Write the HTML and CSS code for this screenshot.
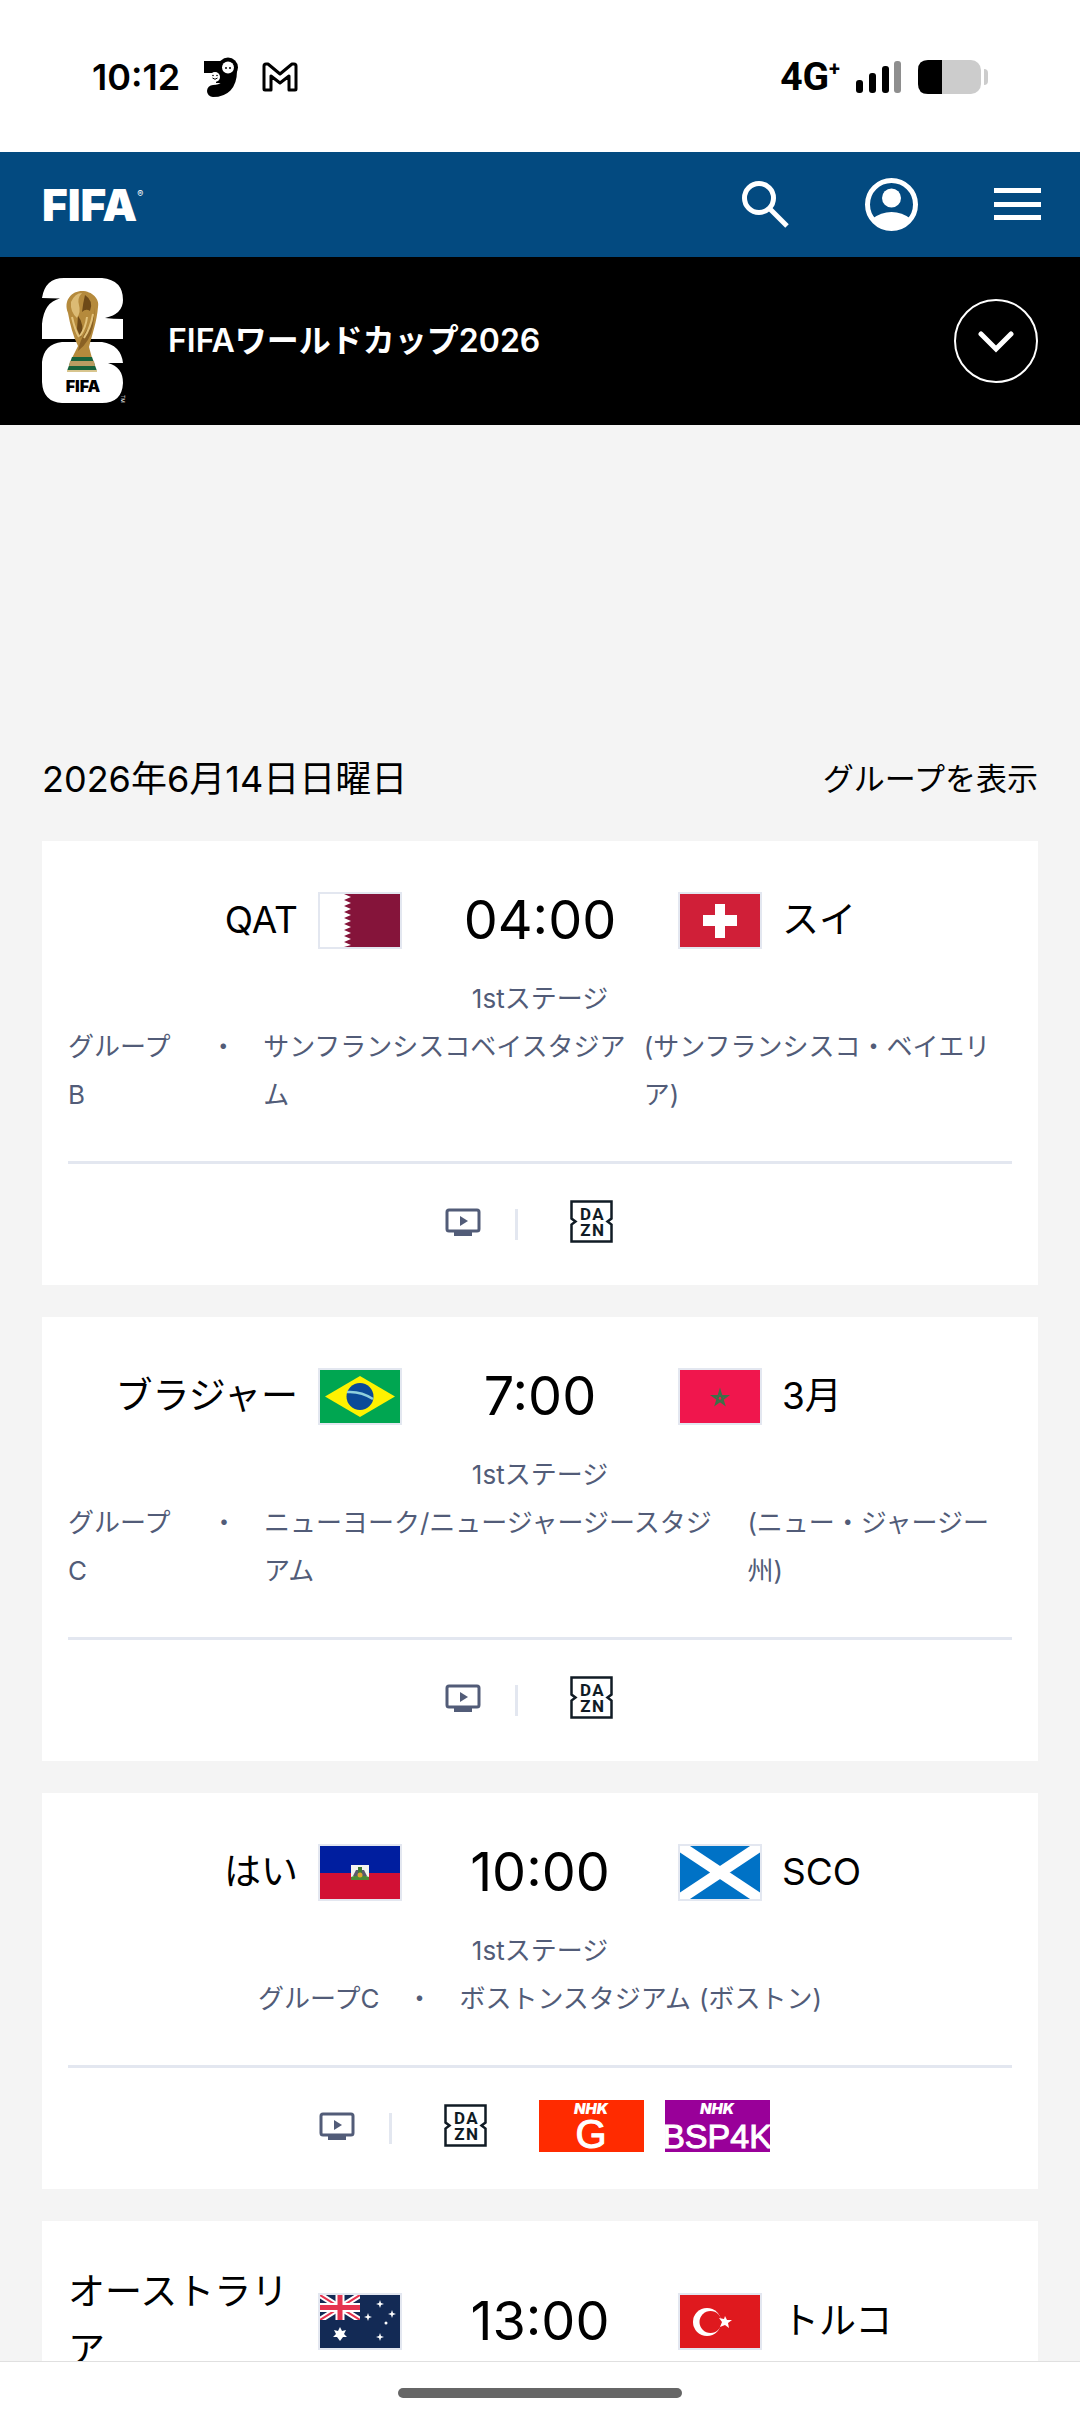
FILE: index.html
```
<!DOCTYPE html>
<html lang="ja">

<head>
  <meta charset="UTF-8" />
  <meta name="viewport" content="width=device-width, initial-scale=1" />
  <title>FIFAワールドカップ2026</title>
  <link rel="stylesheet" href="styles.css">
</head>

<body>
  <!-- shared icons -->
  <svg class="sprite" aria-hidden="true">
    <symbol id="tv" viewBox="0 0 54 32">
      <rect x="11" y="4" width="32" height="21" rx="2" fill="none" stroke="#525c78" stroke-width="3" />
      <path d="M18 26h18v4H18z" fill="#525c78" />
      <path d="M24 10v10l8-5z" fill="#525c78" />
    </symbol>
    <symbol id="dazn" viewBox="0 0 43 43">
      <path d="M1.500 1.500h40v17l-4 3 4 3v17h-40v-17l4-3-4-3z" fill="none" stroke="#101b25" stroke-width="2.500" />
      <g class="dazn-text" fill="#101b25" text-anchor="middle">
        <text x="15.500" y="19.500">D</text>
        <text x="28" y="19.500">A</text>
        <text x="15.500" y="35.500">Z</text>
        <text x="28" y="35.500">N</text>
      </g>
    </symbol>
  </svg>

  <div class="statusbar">
    <div class="status-left">
      <span class="clock">10:12</span>
      <svg width="34" height="40" viewBox="0 0 34 40">
        <path d="M0 4h18v12H0z" />
        <path d="M27 14C27 28 20 34 9 34" fill="none" stroke="#000" stroke-width="12" stroke-linecap="round" />
        <path d="M12 8h12v18H12z" />
        <circle cx="24" cy="10.500" r="10" />
        <circle cx="24" cy="10.500" r="6" fill="#fff" />
        <circle cx="22" cy="11" r="1" />
        <circle cx="26" cy="11" r="1" />
        <circle cx="11" cy="20" r="5" fill="#fff" />
        <circle cx="9" cy="18.500" r=".8" />
        <circle cx="13" cy="18.500" r=".8" />
        <path d="M8.500 21q2.500 2.500 5 0" fill="none" stroke="#000" />
      </svg>
      <svg width="36" height="30" viewBox="0 0 36 30">
        <path d="M2 27V4q0-2 2-2h2l12 10L30 2h2q2 0 2 2v23q0 1-1 1h-6V14l-9 7-9-7v14H3q-1 0-1-1z" fill="none"
          stroke="#000" stroke-width="3" stroke-linejoin="round" />
      </svg>
    </div>
    <div class="status-right">
      <span class="network">4G<sup>+</sup></span>
      <svg width="46" height="34" viewBox="0 0 46 34">
        <rect x="0" y="20" width="7" height="13" rx="3" />
        <rect x="13" y="13" width="7" height="20" rx="3" />
        <rect x="26" y="6" width="7" height="27" rx="3" />
        <rect x="38" y="1" width="7" height="32" rx="3" fill="#8e8e8e" />
      </svg>
      <svg width="70" height="34" viewBox="0 0 70 34">
        <rect width="63" height="34" rx="10" fill="#ccc" />
        <path d="M10 0h14v34H10Q0 34 0 24V10Q0 0 10 0z" />
        <path d="M66 9q4 0 4 4v8q0 4-4 4z" fill="#ccc" />
      </svg>
    </div>
  </div>

  <header class="topbar">
    <a class="brand" href="#">FIFA<sup>®</sup></a>
    <nav class="actions">
      <button class="icon-button" aria-label="検索">
        <svg width="47" height="49" viewBox="0 0 47 49" fill="none" stroke="#fff" stroke-width="5">
          <circle cx="17" cy="18" r="14.500" />
          <path d="M27 28l18 18" />
        </svg>
      </button>
      <button class="icon-button" aria-label="アカウント">
        <svg width="53" height="53" viewBox="0 0 53 53">
          <circle cx="26.500" cy="26.500" r="24" fill="none" stroke="#fff" stroke-width="5" />
          <circle cx="26.500" cy="20" r="9.500" fill="#fff" />
          <path d="M7 41q9-7 19.500-7T46 41q-7 10.500-19.500 10.500T7 41z" fill="#fff" />
        </svg>
      </button>
      <button class="icon-button" aria-label="メニュー">
        <svg width="47" height="33" viewBox="0 0 47 33" fill="#fff">
          <path d="M0 0h47v5H0zM0 14h47v5H0zM0 27h47v5H0z" />
        </svg>
      </button>
    </nav>
  </header>

  <div class="eventbar">
    <svg class="event-logo" width="84" height="126" viewBox="0 0 84 126">
      <path d="M0 20Q3 0 22 0h38q21 2 21 22 0 14-18 18 8 1 18 1v20H0V46q2-22 18-25.500Q8 20 0 20z" fill="#fff" />
      <path d="M20 64h40q19 3 21 21H66q15 4 15 20-1 20-21 20H20Q1 124 0 104V84q2-18 20-20z" fill="#fff" />
      <path d="M26 35C21 22 30 13 40 13s18 8 16 16c-1 14-6 28-9 40l3 11H30l6-12c-5-10-8-22-10-33z" fill="#b58a3c" />
      <path d="M29 24q4-9 11-9-5 5-3 12t-2 13q-7-6-6-16z" fill="#dcbb74" />
      <path d="M43 17q9 6 5 16-4-3-8 1 1-9 3-17zM36 38q7 8 3 22l-4-9z" fill="#6e4a18" />
      <path d="M53 29q-1 14-9 24-6 9-8 20 12-9 15-25 1-8 2-19z" fill="#8a6124" />
      <path d="M45 39q-1 10-7 19M30 39q3 13 7 20M51 36q-2 13-9 24" fill="none" stroke="#e2c27b" stroke-width="2" />
      <path d="M30 79h20l5 14H25z" fill="#16623b" />
      <path d="M28 83h24l1 5H27z" fill="#b99c62" />
      <path d="M25 92h30v2H25z" fill="#d8c58e" />
      <text class="event-logo-text" x="41" y="114" text-anchor="middle">FIFA</text>
      <text class="event-logo-tm" x="79" y="117" fill="#fff" transform="rotate(90 79 117)">TM</text>
    </svg>
    <h1 class="event-title">FIFAワールドカップ2026</h1>
    <button class="expand" aria-label="メニューを開く">
      <svg width="36" height="24" viewBox="0 0 36 24">
        <path d="M3 5l15 15L33 5" fill="none" stroke="#fff" stroke-width="5" stroke-linecap="round" />
      </svg>
    </button>
  </div>

  <main class="matches">
    <div class="day">
      <h2 class="date">2026年6月14日日曜日</h2>
      <button class="show-groups">グループを表示</button>
    </div>

    <article class="match">
      <div class="teams">
        <span class="team home">QAT</span>
        <svg class="flag" viewBox="0 0 80 53" preserveAspectRatio="none">
          <path d="M0 0h80v53H0z" fill="#fff" />
          <path d="M80 0H24l7 3-7 3 7 3-7 3 7 3-7 3 7 3-7 3 7 3-7 3 7 3-7 3 7 3-7 3 7 3-7 3 7 3-7 2h56z" fill="#85143a" />
        </svg>
        <time class="kickoff">04:00</time>
        <svg class="flag" viewBox="0 0 80 53" preserveAspectRatio="none">
          <path d="M0 0h80v53H0z" fill="#d01f38" />
          <path d="M35 10h10v11h12v11H45v12H35V32H23V21h12z" fill="#fff" />
        </svg>
        <span class="team">スイ</span>
      </div>
      <p class="stage">1stステージ</p>
      <p class="venue"><span>グループB</span><span class="dot">・</span><span>サンフランシスコベイスタジアム</span><span class="city">(サンフランシスコ・ベイエリア)</span></p>
      <div class="channels">
        <svg class="tv"><use href="#tv" /></svg>
        <span class="separator"></span>
        <span class="channel"><svg class="dazn"><use href="#dazn" /></svg></span>
      </div>
    </article>

    <article class="match">
      <div class="teams">
        <span class="team home">ブラジャー</span>
        <svg class="flag" viewBox="0 0 80 53" preserveAspectRatio="none">
          <path d="M0 0h80v53H0z" fill="#00a651" />
          <path d="M5 26.500L40 6l35 20.500L40 47z" fill="#fff200" />
          <circle cx="40" cy="26.500" r="13.500" fill="#0b4a98" />
          <path d="M27 22q14-1 26 7" fill="none" stroke="#8fd0dd" stroke-width="2.500" />
        </svg>
        <time class="kickoff">7:00</time>
        <svg class="flag" viewBox="0 0 80 53" preserveAspectRatio="none">
          <path d="M0 0h80v53H0z" fill="#f0164d" />
          <path d="M40 21l4 13-11-8h14l-11 8z" fill="none" stroke="#3c7048" stroke-width="2" />
        </svg>
        <span class="team">3月</span>
      </div>
      <p class="stage">1stステージ</p>
      <p class="venue"><span>グループC</span><span class="dot">・</span><span>ニューヨーク/ニュージャージースタジ<span class="nowrap">アム</span></span><span class="city">(ニュー・ジャージー州)</span></p>
      <div class="channels">
        <svg class="tv"><use href="#tv" /></svg>
        <span class="separator"></span>
        <span class="channel"><svg class="dazn"><use href="#dazn" /></svg></span>
      </div>
    </article>

    <article class="match">
      <div class="teams">
        <span class="team home">はい</span>
        <svg class="flag" viewBox="0 0 80 53" preserveAspectRatio="none">
          <path d="M0 0h80v27H0z" fill="#001e9f" />
          <path d="M0 27h80v26H0z" fill="#d21034" />
          <path d="M31 19h18v15H31z" fill="#f4f4ee" />
          <path d="M31 31q9-4 18 0v3H31z" fill="#4d8a35" />
          <path d="M36 24h8l3 6H33z" fill="#5b5a6b" />
          <path d="M38 21h4v9h-4z" fill="#3f7a32" />
          <circle cx="40" cy="29" r="2.500" fill="#e0a52c" />
        </svg>
        <time class="kickoff">10:00</time>
        <svg class="flag" viewBox="0 0 80 53" preserveAspectRatio="none">
          <path d="M0 0h80v53H0z" fill="#0072c6" />
          <path d="M0 0l80 53M80 0L0 53" stroke="#fff" stroke-width="11" />
        </svg>
        <span class="team">SCO</span>
      </div>
      <p class="stage">1stステージ</p>
      <p class="venue"><span>グループC</span><span class="dot">・</span><span>ボストンスタジアム</span><span class="city">(ボストン)</span></p>
      <div class="channels">
        <svg class="tv"><use href="#tv" /></svg>
        <span class="separator"></span>
        <span class="channel"><svg class="dazn"><use href="#dazn" /></svg></span>
        <svg class="channel" viewBox="0 0 105 52">
          <path d="M0 0h105v52H0z" fill="#ff2b00" />
          <text class="nhk" x="52" y="14" text-anchor="middle">NHK</text>
          <text class="nhk-g" x="52" y="48" text-anchor="middle">G</text>
        </svg>
        <svg class="channel" viewBox="0 0 105 52">
          <path d="M0 0h105v52H0z" fill="#990099" />
          <text class="nhk" x="52" y="14" text-anchor="middle">NHK</text>
          <text class="nhk-bs" x="52" y="48" text-anchor="middle">BSP4K</text>
        </svg>
      </div>
    </article>

    <article class="match">
      <div class="teams">
        <span class="team home">オーストラリア</span>
        <svg class="flag" viewBox="0 0 80 53" preserveAspectRatio="none">
          <path d="M0 0h80v53H0z" fill="#132a55" />
          <svg width="40" height="25" viewBox="0 0 40 25">
            <path d="M0 0l40 25M40 0L0 25" stroke="#fff" stroke-width="6" />
            <path d="M0 0l40 25M40 0L0 25" stroke="#e5334f" stroke-width="2" />
            <path d="M20 0v25M0 12.500h40" stroke="#fff" stroke-width="9" />
            <path d="M20 0v25M0 12.500h40" stroke="#e5334f" stroke-width="5" />
          </svg>
          <path d="M20 32l2 4 4-1-2 4 3 3-4 0-3 4-3-4-4 0 3-3-2-4 4 1z" fill="#fff" />
          <g fill="#fff">
            <path d="M60 5l1 3 3 1-3 1-1 3-1-3-3-1 3-1z" />
            <path d="M72 15l1 3 3 1-3 1-1 3-1-3-3-1 3-1z" />
            <path d="M48 18l1 3 3 1-3 1-1 3-1-3-3-1 3-1z" />
            <path d="M60 38l1 3 3 1-3 1-1 3-1-3-3-1 3-1z" />
            <circle cx="66" cy="28" r="1.500" />
          </g>
        </svg>
        <time class="kickoff">13:00</time>
        <svg class="flag" viewBox="0 0 80 53" preserveAspectRatio="none">
          <path d="M0 0h80v53H0z" fill="#df191e" />
          <circle cx="27" cy="27" r="14" fill="#fff" />
          <circle cx="30.500" cy="27" r="11" fill="#df191e" />
          <path d="M45 21l2 4 5 0-4 3 1 5-4-3-5 2 2-5-3-4 5 1z" fill="#fff" />
        </svg>
        <span class="team">トルコ</span>
      </div>
    </article>
  </main>

  <footer class="gesturebar">
    <span class="pill"></span>
  </footer>
</body>

</html>
```
FILE: styles.css
```
* {
  box-sizing: border-box;
}

body {
  margin: 0;
  height: 100vh;
  display: flex;
  flex-direction: column;
  overflow: hidden;
  background-color: #f4f4f4;
  color: #000;
  font-family: Inter, "Noto Sans CJK JP", sans-serif;
}

h1,
h2,
p {
  margin: 0;
  font-weight: 400;
}

svg {
  display: block;
  flex: none;
}

button {
  background: none;
  border: 0;
  padding: 0;
  color: inherit;
  font: inherit;
  cursor: pointer;
}

.sprite {
  display: none;
}

/* phone status bar */
.statusbar {
  flex: none;
  height: 152px;
  padding: 2px 92px 0;
  background-color: #fff;
  display: flex;
  justify-content: space-between;
  align-items: center;
}

.status-left,
.status-right {
  display: flex;
  align-items: center;
}

.status-left {
  gap: 24px;
}

.status-right {
  gap: 16px;
}

.clock {
  font-size: 36px;
  font-weight: 600;
}

.network {
  font-family: Roboto, sans-serif;
  font-size: 39px;
  font-weight: 700;
  line-height: 40px;
}

.network sup {
  font-size: 20px;
  line-height: 0;
  vertical-align: 14px;
}

/* site header */
.topbar {
  flex: none;
  height: 105px;
  padding: 0 39px 0 42px;
  background-color: #034a80;
  display: flex;
  justify-content: space-between;
  align-items: center;
}

.brand {
  color: #fff;
  font-size: 44px;
  font-weight: 900;
  text-decoration: none;
}

.brand sup {
  font-size: 9px;
  font-weight: 400;
  line-height: 0;
  vertical-align: 24px;
}

.actions {
  display: flex;
  align-items: center;
  gap: 76px;
}

.eventbar {
  flex: none;
  height: 168px;
  padding: 0 42px;
  background-color: #000;
  color: #fff;
  display: flex;
  align-items: center;
}

.event-logo {
  overflow: visible;
}

.event-logo-text {
  font-size: 16px;
  font-weight: 900;
}

.event-logo-tm {
  font-size: 5px;
}

.event-title {
  flex: 1;
  margin-left: 42px;
  padding-bottom: 6px;
  font-size: 32px;
  font-weight: 600;
}

.expand {
  width: 84px;
  height: 84px;
  border: 2px solid #fff;
  border-radius: 50%;
  display: flex;
  justify-content: center;
  align-items: center;
}

/* match list */
.matches {
  flex: 1;
  min-height: 0;
  overflow: hidden;
  padding: 320px 42px 0;
}

.day {
  height: 66px;
  margin-bottom: 30px;
  padding-bottom: 4px;
  display: flex;
  justify-content: space-between;
  align-items: center;
}

.date {
  font-size: 36px;
}

.show-groups {
  font-size: 31px;
}

.match {
  margin-bottom: 32px;
  padding: 42px 26px 0;
  background-color: #fff;
}

.teams {
  display: grid;
  grid-template-columns: 1fr 84px 276px 84px 1fr;
  align-items: center;
  min-height: 74px;
  margin-bottom: 18px;
}

.team {
  margin-left: 20px;
  font-size: 37px;
  line-height: 58px;
}

.home {
  margin: 0 20px 0 0;
  justify-self: end;
}

.flag {
  width: 84px;
  height: 57px;
  border: 2px solid #e3e7f0;
}

.kickoff {
  font-size: 54px;
  line-height: 74px;
  text-align: center;
}

.stage,
.venue {
  color: #525c78;
  font-size: 26px;
  line-height: 48px;
}

.stage {
  text-align: center;
}

.venue {
  display: flex;
  justify-content: center;
}

.dot {
  flex: none;
  width: 80px;
  text-align: center;
}

.city {
  margin-left: 8px;
}

.nowrap {
  white-space: nowrap;
}

.channels {
  height: 124px;
  margin-top: 42px;
  padding-bottom: 6px;
  border-top: 3px solid #e3e7f0;
  display: flex;
  justify-content: center;
  align-items: center;
}

.tv {
  width: 54px;
  height: 32px;
}

.separator {
  width: 3px;
  height: 31px;
  margin: 6px 0 0 25px;
  background-color: #e3e7f0;
}

.channel {
  width: 105px;
  height: 52px;
  margin-left: 21px;
  display: flex;
  justify-content: center;
  align-items: center;
}

.dazn {
  width: 43px;
  height: 43px;
}

.dazn-text {
  font-family: Roboto, sans-serif;
  font-size: 17px;
  font-weight: 700;
}

.nhk,
.nhk-g,
.nhk-bs {
  fill: #fff;
  font-family: "Liberation Sans", sans-serif;
}

.nhk {
  font-family: Inter, sans-serif;
  font-size: 15px;
  font-style: italic;
  font-weight: 900;
}

.nhk-g,
.nhk-bs {
  stroke: #fff;
  stroke-width: 1px;
}

.nhk-g {
  font-size: 40px;
}

.nhk-bs {
  font-size: 34px;
}

/* home gesture strip */
.gesturebar {
  flex: none;
  height: 63px;
  border-top: 1px solid #e0e0e0;
  background-color: #fff;
  display: flex;
  justify-content: center;
  align-items: center;
}

.pill {
  width: 284px;
  height: 10px;
  border-radius: 5px;
  background-color: #666;
}
```
